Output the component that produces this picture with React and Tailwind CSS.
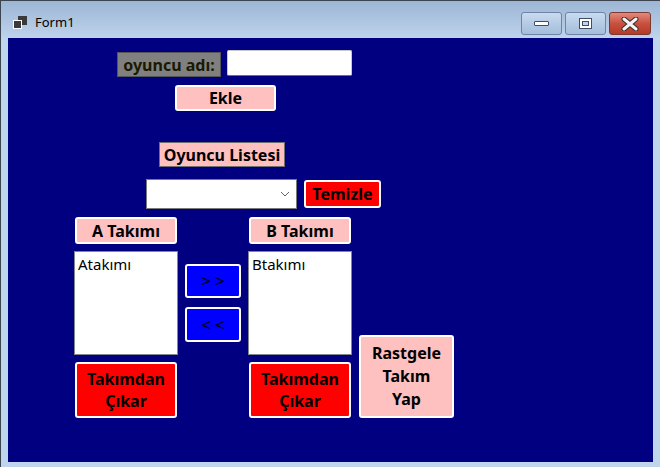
import React from "react";

const font = { fontFamily: '"Noto Sans", "Segoe UI", Arial, sans-serif' };

function WinButton({ className = "", children }) {
  return (
    <div
      className={
        "flex items-center justify-center rounded-[3px] border-2 border-white leading-[22px] font-bold text-[16px] text-black text-center " +
        className
      }
    >
      {children}
    </div>
  );
}

function TitleIcon() {
  return (
    <svg width="16" height="16" viewBox="0 0 16 16">
      <rect x="6" y="1" width="9" height="9" fill="#3a3a3a" />
      <rect x="1.5" y="5.5" width="8" height="8" fill="#3a3a3a" stroke="#fff" strokeWidth="1" />
    </svg>
  );
}

function CaptionButtons() {
  return (
    <div className="flex gap-[3px] pt-[11px] pr-[9px]">
      <div className="flex h-[23px] w-[41px] items-center justify-center rounded-[3px] border border-[#6d84a6] bg-gradient-to-b from-[#c9dbef] via-[#b5cbe4] to-[#a6bedb]">
        <div className="h-[5px] w-[15px] rounded-[1px] border border-[#3f4e63] bg-white" />
      </div>
      <div className="flex h-[23px] w-[41px] items-center justify-center rounded-[3px] border border-[#6d84a6] bg-gradient-to-b from-[#c9dbef] via-[#b5cbe4] to-[#a6bedb]">
        <div className="h-[11px] w-[13px] border border-[#3f4e63] bg-white p-[2px]">
          <div className="h-full w-full border border-[#3f4e63] bg-[#c3d4ea]" />
        </div>
      </div>
      <div className="flex h-[23px] w-[42px] items-center justify-center rounded-[3px] border border-[#7a3a33] bg-gradient-to-b from-[#e08a7c] via-[#c9503f] to-[#b53a28]">
        <svg width="18" height="14" viewBox="0 0 18 14">
          <path d="M3 2 L15 12 M15 2 L3 12" stroke="#3b2a2a" strokeWidth="5" strokeLinecap="round" />
          <path d="M3 2 L15 12 M15 2 L3 12" stroke="#f4f4f4" strokeWidth="3" strokeLinecap="round" />
        </svg>
      </div>
    </div>
  );
}

export default function App() {
  return (
    <div style={font} className="flex h-[467px] w-[660px] flex-col overflow-hidden border-t border-l border-[#3c4450] bg-[#bfd5ee]">
      {/* title bar */}
      <div className="flex h-[37px] items-start justify-between bg-gradient-to-b from-[#9cb6d4] to-[#bed3ec]">
        <div className="flex items-center gap-[7px] pl-[11px] pt-[12px]">
          <TitleIcon />
          <span className="text-[13px] text-black">Form1</span>
        </div>
        <CaptionButtons />
      </div>

      {/* client area */}
      <div className="flex flex-1 flex-col px-[7px] pb-[5px]">
        <div className="flex-1 bg-[#000080] pt-[12px]">
          <div className="flex items-start">
            <div className="ml-[109px] mt-[2px] flex h-[25px] w-[104px] items-center justify-center border border-[#555] bg-[#808080] text-[16px] font-bold text-[#1a1a00]">
              oyuncu adı:
            </div>
            <div className="ml-[6px] h-[26px] w-[125px] rounded-[2px] border border-[#c8c8c8] border-b-[#6e6e6e] bg-white" />
          </div>

          <div className="mt-[8px] flex">
            <WinButton className="ml-[167px] h-[26px] w-[101px] bg-[#ffc0c0]">Ekle</WinButton>
          </div>

          <div className="mt-[31px] flex">
            <div className="ml-[151px] flex h-[25px] w-[126px] items-center justify-center border border-[#707070] bg-[#ffc0c0] text-[16px] font-bold text-black">
              Oyuncu Listesi
            </div>
          </div>

          <div className="mt-[12px] flex items-start">
            <div className="ml-[138px] flex h-[30px] w-[151px] items-center justify-end border border-[#7a7a7a] bg-white pr-[6px]">
              <svg width="10" height="6" viewBox="0 0 10 6">
                <path d="M1 1 L5 5 L9 1" fill="none" stroke="#606060" strokeWidth="1" />
              </svg>
            </div>
            <WinButton className="ml-[7px] mt-[1px] h-[28px] w-[77px] bg-[#ff0000]">Temizle</WinButton>
          </div>

          <div className="mt-[8px] flex items-start">
            <div className="ml-[66px] flex w-[104px] flex-col">
              <WinButton className="ml-[1px] h-[27px] w-[102px] bg-[#ffc0c0]">A Takımı</WinButton>
              <div className="mt-[7px] h-[104px] w-[104px] border border-[#828790] bg-white px-[3px] pt-[1px] text-[15px] text-black">
                Atakımı
              </div>
              <WinButton className="ml-[1px] mt-[7px] h-[56px] w-[102px] bg-[#ff0000]">
                Takımdan
                <br />
                Çıkar
              </WinButton>
            </div>

            <div className="ml-[7px] flex w-[56px] flex-col">
              <div className="mt-[47px] flex h-[34px] w-[56px] items-center justify-center rounded-[3px] border-2 border-white bg-[#0000ff] pl-[4px] text-[17px] tracking-[4px] text-black">
                &gt;&gt;
              </div>
              <div className="mt-[9px] flex h-[35px] w-[56px] items-center justify-center rounded-[3px] border-2 border-white bg-[#0000ff] pl-[4px] text-[17px] tracking-[4px] text-black">
                &lt;&lt;
              </div>
            </div>

            <div className="ml-[7px] flex w-[104px] flex-col">
              <WinButton className="ml-[1px] h-[27px] w-[102px] bg-[#ffc0c0]">B Takımı</WinButton>
              <div className="mt-[7px] h-[104px] w-[104px] border border-[#828790] bg-white px-[3px] pt-[1px] text-[15px] text-black">
                Btakımı
              </div>
              <WinButton className="ml-[1px] mt-[7px] h-[56px] w-[102px] bg-[#ff0000]">
                Takımdan
                <br />
                Çıkar
              </WinButton>
            </div>

            <WinButton className="ml-[7px] h-[83px] w-[95px] self-end bg-[#ffc0c0] leading-[23px]">
              Rastgele
              <br />
              Takım
              <br />
              Yap
            </WinButton>
          </div>
        </div>
      </div>
    </div>
  );
}
